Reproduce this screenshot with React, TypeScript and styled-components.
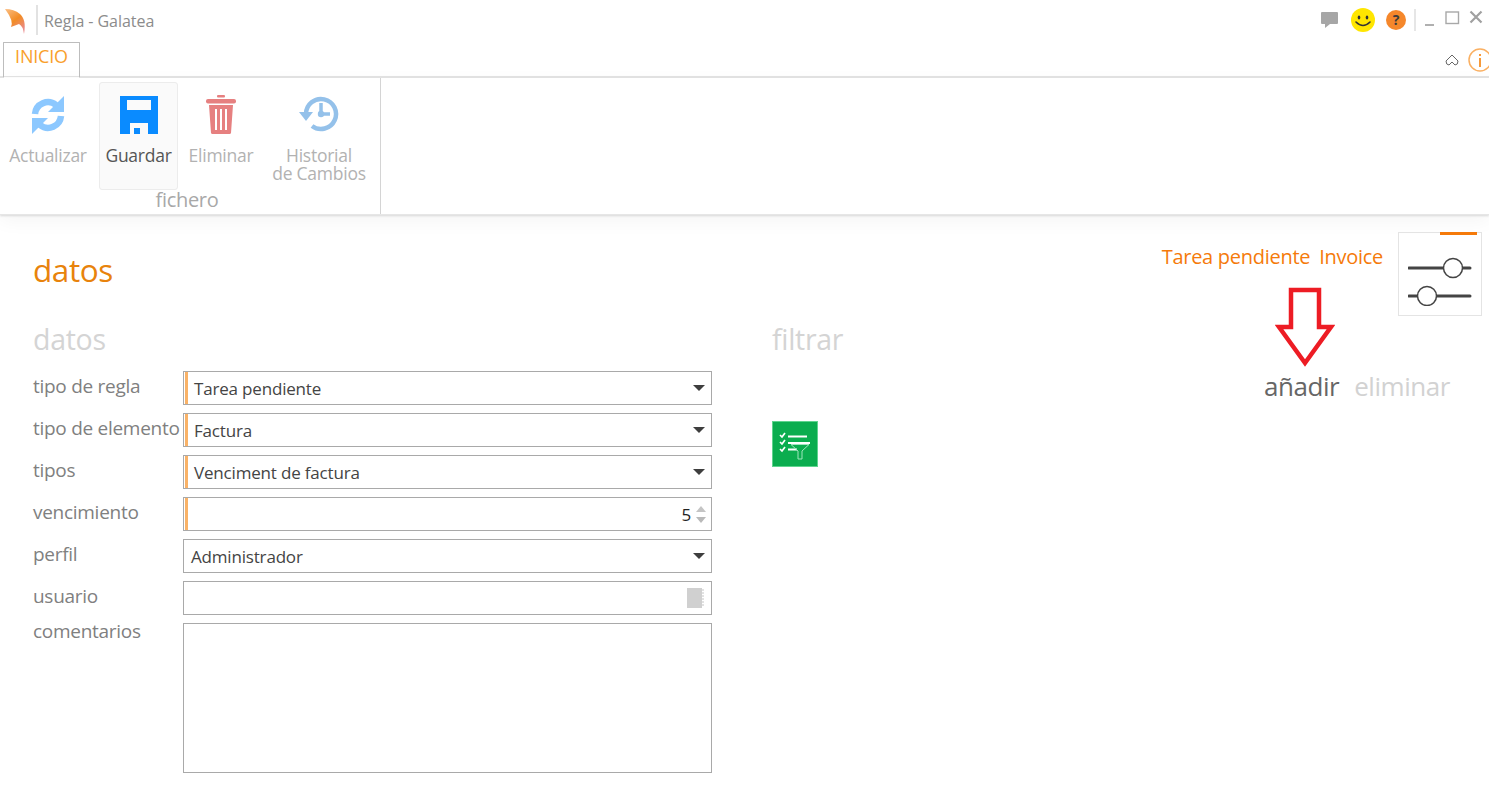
import React from "react";
import styled, { createGlobalStyle } from "styled-components";

const GlobalStyle = createGlobalStyle`
    html, body {
        margin: 0;
        padding: 0;
        background: #fff;
        font-family: "Open Sans", "Noto Sans", sans-serif;
    }
`;

const Page = styled.div`
    position: relative;
    width: 1489px;
    height: 790px;
    overflow: hidden;
    background: #fff;
`;

const TitleBar = styled.div`
    display: flex;
    align-items: center;
    height: 41px;
    padding: 0 1px 2px 4px;
    box-sizing: border-box;
`;

const TitleDivider = styled.div`
    width: 2px;
    height: 30px;
    margin: 0 6px 0 8px;
    background: #e2e2e2;
`;

const WindowDivider = styled.div`
    width: 2px;
    height: 22px;
    margin: 0 4px 0 3px;
    background: #e6e6e6;
`;

const Title = styled.span`
    flex: 1;
    padding-top: 2px;
    font-size: 16px;
    letter-spacing: -0.05px;
    color: #8c8c8c;
`;

const WindowIcons = styled.div`
    display: flex;
    align-items: center;
    height: 30px;
`;

const IconSlot = styled.div<{ $width: number }>`
    display: flex;
    justify-content: center;
    align-items: center;
    width: ${({ $width }) => $width}px;
`;

const TabRow = styled.div`
    display: flex;
    align-items: flex-end;
    justify-content: space-between;
    height: 37px;
    padding: 0 0 0 3px;
    box-sizing: border-box;
    border-bottom: 2px solid #e3e3e3;
`;

const Tab = styled.div`
    width: 77px;
    height: 36px;
    margin-bottom: -2px;
    box-sizing: border-box;
    border: 1px solid #bdbdbd;
    border-bottom: 1px solid #fff;
    border-radius: 1px 1px 0 0;
    font-size: 18px;
    line-height: 27px;
    text-align: center;
    letter-spacing: -0.2px;
    color: #f9a02c;
`;

const TabTools = styled.div`
    display: flex;
    align-items: center;
    gap: 9px;
    margin-right: -3px;
    margin-bottom: 4px;
`;

const Ribbon = styled.div`
    position: relative;
    height: 137px;
    box-shadow: 0 1px 2px #d8d8d8, 0 6px 18px rgba(0, 0, 0, 0.045);
    border-bottom: 1px solid #e6e6e6;
    box-sizing: border-box;
`;

const RibbonGroup = styled.div`
    position: relative;
    display: flex;
    align-items: flex-start;
    width: 381px;
    height: 136px;
    box-sizing: border-box;
    border-right: 1px solid #d4d4d4;
    padding-top: 4px;
`;

const RibbonButton = styled.div<{ $width: number; $active?: boolean; $inset?: number }>`
    display: flex;
    flex-direction: column;
    align-items: center;
    width: ${({ $width }) => $width}px;
    height: 108px;
    box-sizing: border-box;
    padding: 11px ${({ $inset }) => $inset ?? 0}px 0 0;
    border-radius: 3px;
    border: 1px solid ${({ $active }) => ($active ? "#ececec" : "transparent")};
    background: ${({ $active }) => ($active ? "#fafafa" : "transparent")};
    color: ${({ $active }) => ($active ? "#555" : "#b2b2b2")};
    font-size: 17.5px;
    letter-spacing: -0.25px;
    line-height: 18px;
    text-align: center;
    white-space: nowrap;
`;

const ButtonIcon = styled.div`
    display: flex;
    justify-content: center;
    align-items: center;
    height: 42px;
    margin-bottom: 10px;
`;

const GroupLabel = styled.div`
    position: absolute;
    left: 0;
    right: 0;
    bottom: 1px;
    padding-right: 6px;
    text-align: center;
    font-size: 20px;
    letter-spacing: -0.3px;
    color: #a8a8a8;
`;

const Content = styled.div`
    padding: 15px 7px 0 33px;
`;

const HeaderRow = styled.div`
    display: flex;
    justify-content: space-between;
    align-items: flex-start;
    height: 84px;
`;

const PageTitle = styled.h1`
    margin: 18px 0 0;
    font-size: 31.5px;
    font-weight: 400;
    letter-spacing: -0.4px;
    color: #e8830c;
`;

const HeaderTools = styled.div`
    display: flex;
    align-items: flex-start;
    gap: 15px;
    margin-top: 2px;
`;

const Crumbs = styled.div`
    display: flex;
    gap: 9px;
    margin-top: 11px;
    font-size: 20px;
    letter-spacing: -0.28px;
    color: #f57a0a;
`;

const SliderButton = styled.div`
    position: relative;
    width: 84px;
    height: 84px;
    box-sizing: border-box;
    border: 1px solid #e4e4e4;
    display: flex;
    align-items: center;
    justify-content: center;

    &::before {
        content: "";
        position: absolute;
        top: -1px;
        right: 4px;
        width: 37px;
        height: 3px;
        background: #f57a0a;
    }
`;

const Columns = styled.div`
    display: flex;
`;

const FormColumn = styled.div`
    width: 679px;
    flex: none;
`;

const SectionHeading = styled.h2`
    height: 57px;
    margin: 0;
    font-size: 28.5px;
    font-weight: 400;
    line-height: 51px;
    letter-spacing: -0.3px;
    color: #d4d4d4;
`;

const Form = styled.div`
    display: flex;
    flex-direction: column;
    gap: 8px;
`;

const FormRow = styled.div`
    display: flex;
    align-items: flex-start;
`;

const FieldLabel = styled.label<{ $tight?: boolean }>`
    flex: none;
    width: 150px;
    font-size: 19px;
    line-height: ${({ $tight }) => ($tight ? 16 : 30)}px;
    letter-spacing: -0.28px;
    white-space: nowrap;
    color: #808080;
`;

const Field = styled.div<{ $required?: boolean; $tall?: boolean }>`
    position: relative;
    display: flex;
    align-items: center;
    justify-content: space-between;
    width: 529px;
    height: ${({ $tall }) => ($tall ? 150 : 34)}px;
    box-sizing: border-box;
    padding: 0 6px 0 ${({ $required }) => ($required ? 10 : 7)}px;
    border: 1px solid #a9a9a9;
    font-size: 17px;
    letter-spacing: -0.18px;
    color: #444;

    &::before {
        content: "";
        display: ${({ $required }) => ($required ? "block" : "none")};
        position: absolute;
        top: 0;
        bottom: 0;
        left: 1px;
        width: 3px;
        background: #f9b267;
    }
`;

const Caret = styled.span`
    width: 0;
    height: 0;
    border-left: 6px solid transparent;
    border-right: 6px solid transparent;
    border-top: 6px solid #3e3e3e;
`;

const NumberValue = styled.span`
    margin-left: auto;
    margin-right: 1px;
    color: #222;
`;

const Spinner = styled.span`
    display: flex;
    flex-direction: column;
    gap: 5px;
    margin-left: 4px;
    margin-right: -1px;
`;

const SpinArrow = styled.span<{ $up?: boolean }>`
    width: 0;
    height: 0;
    border-left: 5px solid transparent;
    border-right: 5px solid transparent;
    border-top: ${({ $up }) => ($up ? "0" : "6px solid #b9b9b9")};
    border-bottom: ${({ $up }) => ($up ? "6px solid #c4c4c4" : "0")};
`;

const FilterColumn = styled.div`
    position: relative;
    flex: 1;
    padding-left: 60px;
`;

const FilterActions = styled.div`
    position: absolute;
    top: 54px;
    right: 32px;
    display: flex;
    gap: 15px;
    font-size: 26px;
    letter-spacing: -0.45px;
`;

const FilterAction = styled.span<{ $enabled?: boolean }>`
    color: ${({ $enabled }) => ($enabled ? "#666" : "#d2d2d2")};
`;

const FilterButton = styled.div`
    display: flex;
    align-items: center;
    justify-content: center;
    width: 46px;
    height: 46px;
    margin-top: 50px;
    box-sizing: border-box;
    background: #0bad4f;
    border: 1px solid #5fd48e;
`;

const ArrowMark = styled.svg`
    position: absolute;
    left: 1275px;
    top: 287px;
`;

const Logo = () => (
    <svg width="24" height="30" viewBox="0 0 24 30">
        <defs>
            <linearGradient id="logoFill" x1="0" y1="0" x2="0.6" y2="1">
                <stop offset="0" stopColor="#fbbf85" />
                <stop offset="0.55" stopColor="#f28c25" />
                <stop offset="1" stopColor="#e98a8a" />
            </linearGradient>
        </defs>
        <path
            d="M1 4 Q10 4 16 9 C20 13 22 18 20 29 Q19 21 15 19 L7 22 Q10 16 1 4 Z"
            fill="url(#logoFill)"
        />
    </svg>
);

const ChatIcon = () => (
    <svg width="20" height="20" viewBox="0 0 20 20">
        <path d="M2 2 H17 a1 1 0 0 1 1 1 V13 a1 1 0 0 1 -1 1 H10 L5 18 V14 H2 a1 1 0 0 1 -1 -1 V3 a1 1 0 0 1 1 -1 Z" fill="#a6a6a6" />
    </svg>
);

const SmileIcon = () => (
    <svg width="24" height="24" viewBox="0 0 24 24">
        <circle cx="12" cy="12" r="12" fill="#ffe600" />
        <ellipse cx="8" cy="9.5" rx="1.3" ry="2" fill="#333" />
        <ellipse cx="16" cy="9.5" rx="1.3" ry="2" fill="#333" />
        <path d="M5 14 Q12 21 19 14" fill="none" stroke="#333" strokeWidth="1.6" strokeLinecap="round" />
    </svg>
);

const HelpIcon = () => (
    <svg width="20" height="20" viewBox="0 0 20 20">
        <circle cx="10" cy="10" r="10" fill="#f5872b" />
        <text x="10" y="15" textAnchor="middle" fontSize="14" fontWeight="700" fontFamily="Open Sans" fill="#3c3c3c">?</text>
    </svg>
);

const MinimizeIcon = () => (
    <svg width="10" height="16" viewBox="0 0 10 16">
        <rect x="0" y="12" width="9" height="2" fill="#b0b0b0" />
    </svg>
);

const MaximizeIcon = () => (
    <svg width="15" height="18" viewBox="0 0 15 18">
        <rect x="1" y="1" width="12.5" height="11.5" fill="none" stroke="#a8a8a8" strokeWidth="1.4" />
    </svg>
);

const CloseIcon = () => (
    <svg width="14" height="20" viewBox="0 0 14 20">
        <path d="M1.5 1.5 L12.5 12.5 M12.5 1.5 L1.5 12.5" stroke="#a0a0a0" strokeWidth="2.2" />
    </svg>
);

const CollapseIcon = () => (
    <svg width="14" height="12" viewBox="0 0 14 12">
        <path d="M7 1 L13 7 Q13 11 10 11 L7 8 L4 11 Q1 11 1 7 Z" fill="none" stroke="#666" strokeWidth="1" />
    </svg>
);

const InfoIcon = () => (
    <svg width="24" height="24" viewBox="0 0 24 24">
        <circle cx="12" cy="12" r="11" fill="none" stroke="#fab063" strokeWidth="1.5" />
        <rect x="11" y="10" width="2" height="9" fill="#f79a3a" />
        <rect x="11" y="6" width="2" height="2" fill="#f79a3a" />
    </svg>
);

const RefreshIcon = () => (
    <svg width="34" height="40" viewBox="0 0 34 40">
        <g fill="none" stroke="#8cc8ff" strokeWidth="6.5">
            <path d="M4 19 A13 13 0 0 1 25 10" />
            <path d="M30 21 A13 13 0 0 1 9 30" />
        </g>
        <g fill="#8cc8ff">
            <polygon points="33,1 33,17 17,17" />
            <polygon points="1,39 1,23 17,23" />
        </g>
    </svg>
);

const SaveIcon = () => (
    <svg width="40" height="40" viewBox="0 0 40 40">
        <path
            fillRule="evenodd"
            fill="#0a8bff"
            d="M1 1 H39 V39 H1 Z M8 5 V15 H32 V5 Z M11 28 V39 H29 V28 Z"
        />
        <rect x="15" y="33" width="6" height="6" fill="#0a8bff" />
    </svg>
);

const TrashIcon = () => (
    <svg width="30" height="40" viewBox="0 0 30 40">
        <g fill="#e68080">
            <rect x="11" y="0" width="8" height="2.5" rx="1" />
            <rect x="0" y="4" width="30" height="4.5" rx="2" />
            <path
                fillRule="evenodd"
                d="M3 10 H27 L25 38 a1.5 1.5 0 0 1 -1.5 1 H6.5 a1.5 1.5 0 0 1 -1.5 -1 Z M9 14 V35 H11 V14 Z M14 14 V35 H16 V14 Z M19 14 V35 H21 V14 Z"
            />
        </g>
    </svg>
);

const HistoryIcon = () => (
    <svg width="40" height="40" viewBox="0 0 40 40">
        <path
            d="M7 19 A15 15 0 1 1 13 31"
            fill="none"
            stroke="#94c1ea"
            strokeWidth="4.5"
        />
        <polygon points="0,17 14,17 7,26" fill="#94c1ea" />
        <path d="M22 8 V19 H31" fill="none" stroke="#94c1ea" strokeWidth="3.5" />
        <circle cx="22" cy="19" r="3.2" fill="#94c1ea" />
    </svg>
);

const SlidersIcon = () => (
    <svg width="64" height="64" viewBox="0 0 64 64">
        <path d="M1 26 H62 M1 54 H62" stroke="#444" strokeWidth="3" strokeLinecap="round" />
        <circle cx="45" cy="26" r="9.5" fill="#fff" stroke="#444" strokeWidth="1.5" />
        <circle cx="19" cy="54" r="9.5" fill="#fff" stroke="#444" strokeWidth="1.5" />
    </svg>
);

const FilterListIcon = () => (
    <svg width="44" height="44" viewBox="0 0 44 44" fill="none">
        <path d="M7 13 L9 15 L12 11 M7 20 L9 22 L12 18 M7 27 L9 29 L12 25" stroke="#fff" strokeWidth="1.7" />
        <path d="M15 14.5 H34 M15 21 H37 M15 27.5 H24" stroke="#fff" strokeWidth="1.8" />
        <path d="M18 22.5 H36 L29 29 V37 H25 V29 Z" stroke="#9fe6bd" strokeWidth="1" />
    </svg>
);

const NotebookIcon = () => (
    <svg width="18" height="20" viewBox="0 0 18 20">
        <rect x="0" y="0" width="15" height="20" fill="#d0d0d0" />
        <path d="M15 2 H17 M15 5 H17 M15 8 H17 M15 11 H17 M15 14 H17 M15 17 H17" stroke="#c4c4c4" strokeWidth="1" />
    </svg>
);

const selectRows = [
    { label: "tipo de regla", value: "Tarea pendiente" },
    { label: "tipo de elemento", value: "Factura" },
    { label: "tipos", value: "Venciment de factura" },
];

export default function App() {
    return (
        <Page>
            <GlobalStyle />
            <TitleBar>
                <Logo />
                <TitleDivider />
                <Title>Regla - Galatea</Title>
                <WindowIcons>
                    <IconSlot $width={30}><ChatIcon /></IconSlot>
                    <IconSlot $width={36}><SmileIcon /></IconSlot>
                    <IconSlot $width={30}><HelpIcon /></IconSlot>
                    <WindowDivider />
                    <IconSlot $width={20}><MinimizeIcon /></IconSlot>
                    <IconSlot $width={24}><MaximizeIcon /></IconSlot>
                    <IconSlot $width={24}><CloseIcon /></IconSlot>
                </WindowIcons>
            </TitleBar>
            <TabRow>
                <Tab>INICIO</Tab>
                <TabTools>
                    <CollapseIcon />
                    <InfoIcon />
                </TabTools>
            </TabRow>
            <Ribbon>
                <RibbonGroup>
                    <RibbonButton $width={99} $inset={3}>
                        <ButtonIcon><RefreshIcon /></ButtonIcon>
                        Actualizar
                    </RibbonButton>
                    <RibbonButton $width={79} $active>
                        <ButtonIcon><SaveIcon /></ButtonIcon>
                        Guardar
                    </RibbonButton>
                    <RibbonButton $width={86}>
                        <ButtonIcon><TrashIcon /></ButtonIcon>
                        Eliminar
                    </RibbonButton>
                    <RibbonButton $width={110}>
                        <ButtonIcon><HistoryIcon /></ButtonIcon>
                        Historial
                        <br />
                        de Cambios
                    </RibbonButton>
                    <GroupLabel>fichero</GroupLabel>
                </RibbonGroup>
            </Ribbon>
            <Content>
                <HeaderRow>
                    <PageTitle>datos</PageTitle>
                    <HeaderTools>
                        <Crumbs>
                            <span>Tarea pendiente</span>
                            <span>Invoice</span>
                        </Crumbs>
                        <SliderButton><SlidersIcon /></SliderButton>
                    </HeaderTools>
                </HeaderRow>
                <Columns>
                    <FormColumn>
                        <SectionHeading>datos</SectionHeading>
                        <Form>
                            {selectRows.map((row) => (
                                <FormRow key={row.label}>
                                    <FieldLabel>{row.label}</FieldLabel>
                                    <Field $required>
                                        {row.value}
                                        <Caret />
                                    </Field>
                                </FormRow>
                            ))}
                            <FormRow>
                                <FieldLabel>vencimiento</FieldLabel>
                                <Field $required>
                                    <NumberValue>5</NumberValue>
                                    <Spinner>
                                        <SpinArrow $up />
                                        <SpinArrow />
                                    </Spinner>
                                </Field>
                            </FormRow>
                            <FormRow>
                                <FieldLabel>perfil</FieldLabel>
                                <Field>
                                    Administrador
                                    <Caret />
                                </Field>
                            </FormRow>
                            <FormRow>
                                <FieldLabel>usuario</FieldLabel>
                                <Field>
                                    <span />
                                    <NotebookIcon />
                                </Field>
                            </FormRow>
                            <FormRow>
                                <FieldLabel $tight>comentarios</FieldLabel>
                                <Field $tall />
                            </FormRow>
                        </Form>
                    </FormColumn>
                    <FilterColumn>
                        <SectionHeading>filtrar</SectionHeading>
                        <FilterActions>
                            <FilterAction $enabled>añadir</FilterAction>
                            <FilterAction>eliminar</FilterAction>
                        </FilterActions>
                        <FilterButton><FilterListIcon /></FilterButton>
                    </FilterColumn>
                </Columns>
            </Content>
            <ArrowMark width="60" height="82" viewBox="0 0 60 82">
                <polygon
                    points="16,3 44,3 44,40 56,40 30,76 4,40 16,40"
                    fill="#fff"
                    stroke="#ed1c24"
                    strokeWidth="4.5"
                />
            </ArrowMark>
        </Page>
    );
}
